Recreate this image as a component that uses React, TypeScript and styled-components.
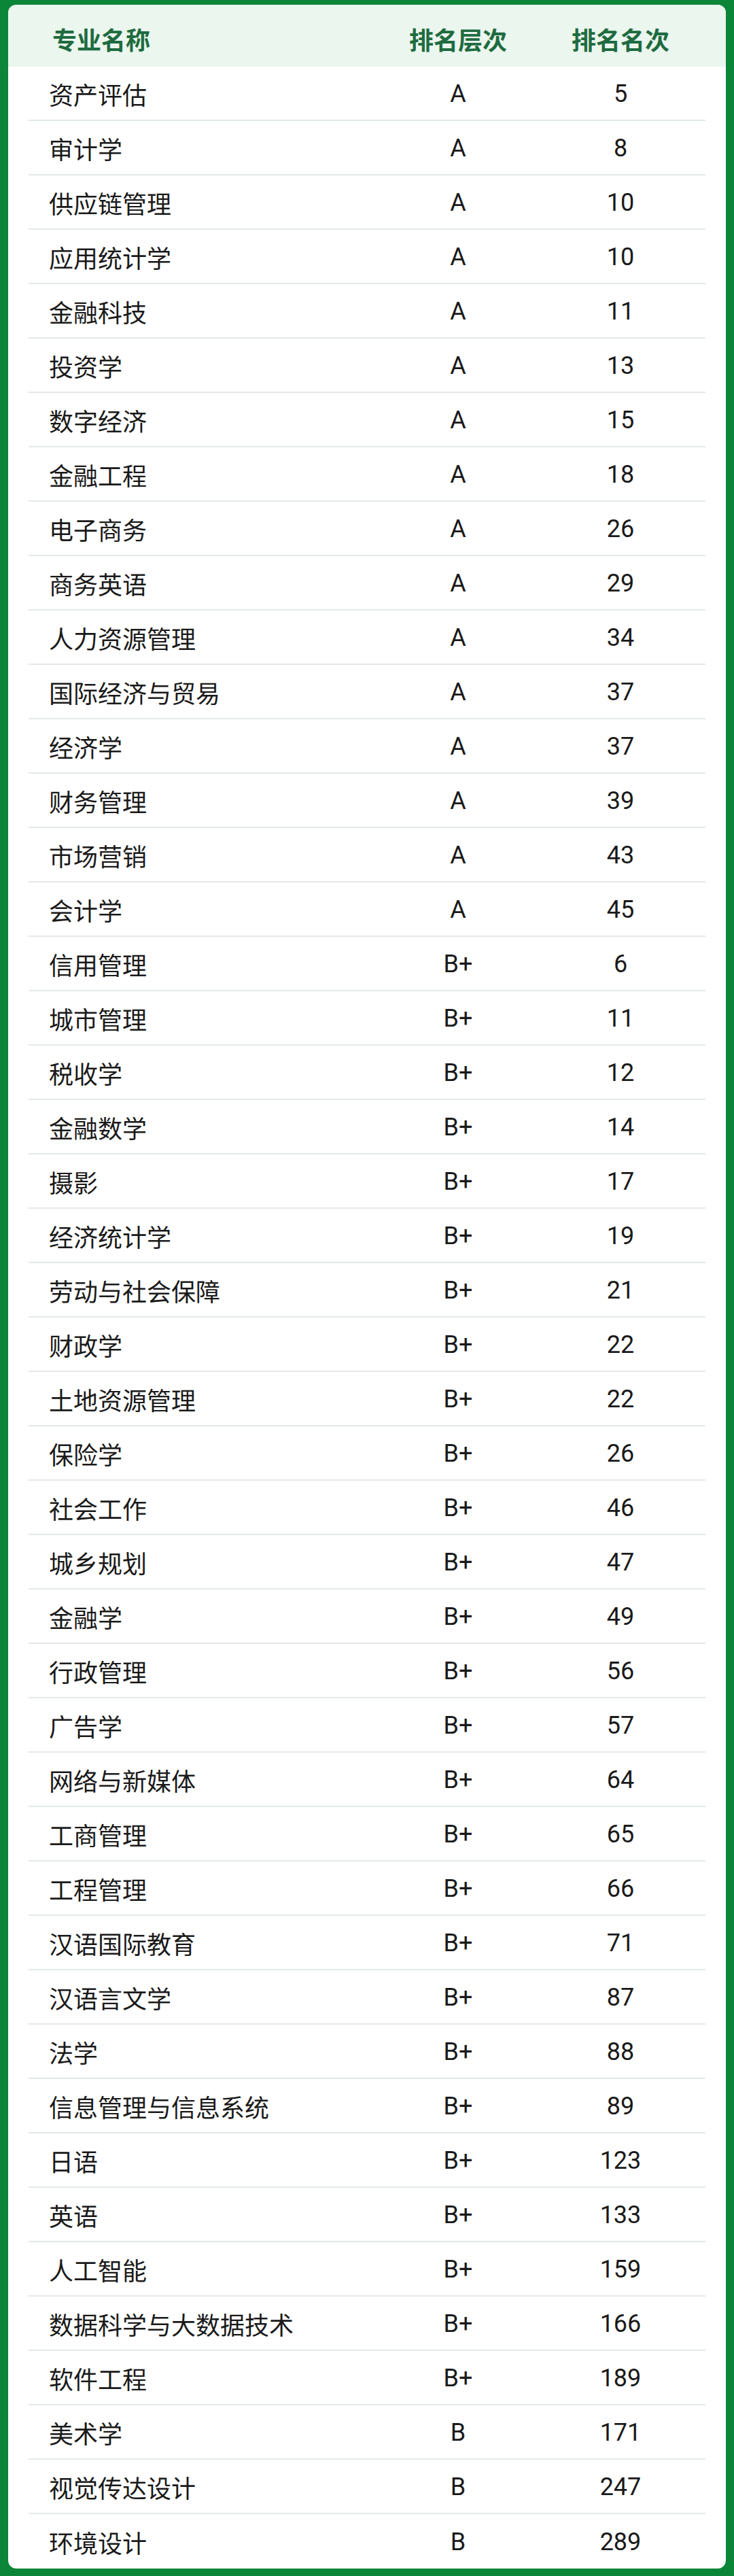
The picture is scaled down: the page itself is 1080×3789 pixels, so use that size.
import React from 'react';
import styled, { createGlobalStyle } from 'styled-components';

const rows: [string, string, number][] = [
  ['资产评估', 'A', 5],
  ['审计学', 'A', 8],
  ['供应链管理', 'A', 10],
  ['应用统计学', 'A', 10],
  ['金融科技', 'A', 11],
  ['投资学', 'A', 13],
  ['数字经济', 'A', 15],
  ['金融工程', 'A', 18],
  ['电子商务', 'A', 26],
  ['商务英语', 'A', 29],
  ['人力资源管理', 'A', 34],
  ['国际经济与贸易', 'A', 37],
  ['经济学', 'A', 37],
  ['财务管理', 'A', 39],
  ['市场营销', 'A', 43],
  ['会计学', 'A', 45],
  ['信用管理', 'B+', 6],
  ['城市管理', 'B+', 11],
  ['税收学', 'B+', 12],
  ['金融数学', 'B+', 14],
  ['摄影', 'B+', 17],
  ['经济统计学', 'B+', 19],
  ['劳动与社会保障', 'B+', 21],
  ['财政学', 'B+', 22],
  ['土地资源管理', 'B+', 22],
  ['保险学', 'B+', 26],
  ['社会工作', 'B+', 46],
  ['城乡规划', 'B+', 47],
  ['金融学', 'B+', 49],
  ['行政管理', 'B+', 56],
  ['广告学', 'B+', 57],
  ['网络与新媒体', 'B+', 64],
  ['工商管理', 'B+', 65],
  ['工程管理', 'B+', 66],
  ['汉语国际教育', 'B+', 71],
  ['汉语言文学', 'B+', 87],
  ['法学', 'B+', 88],
  ['信息管理与信息系统', 'B+', 89],
  ['日语', 'B+', 123],
  ['英语', 'B+', 133],
  ['人工智能', 'B+', 159],
  ['数据科学与大数据技术', 'B+', 166],
  ['软件工程', 'B+', 189],
  ['美术学', 'B', 171],
  ['视觉传达设计', 'B', 247],
  ['环境设计', 'B', 289],
];

const GlobalStyle = createGlobalStyle`
  html, body {
    margin: 0;
    padding: 0;
    background: #0b8639;
  }
  body {
    font-family: Roboto, "Noto Sans CJK SC", sans-serif;
  }
`;

const App = () => {
  return (
    <>
      <GlobalStyle />
      <Page>
        <Card>
          <Header>
            <HeadCell $first>专业名称</HeadCell>
            <HeadCell>排名层次</HeadCell>
            <HeadCell>排名名次</HeadCell>
          </Header>
          {rows.map(([name, level, rank], i) => (
            <Row key={name} $last={i === rows.length - 1}>
              <NameCell>{name}</NameCell>
              <Cell>{level}</Cell>
              <Cell>{rank}</Cell>
            </Row>
          ))}
        </Card>
      </Page>
    </>
  );
};

export default App;

const Page = styled.div`
  width: 1080px;
  height: 3789px;
  box-sizing: border-box;
  padding: 7px 12px 11px;
  background: #0b8639;
`;

const Card = styled.div`
  background: #ffffff;
  border-radius: 12px;
  overflow: hidden;
`;

const Header = styled.div`
  display: grid;
  grid-template-columns: 1fr 160px 160px;
  column-gap: 79px;
  align-items: center;
  height: 91px;
  padding: 8px 75px 0 30px;
  box-sizing: border-box;
  background: #eaf6ee;
`;

const HeadCell = styled.div<{ $first?: boolean }>`
  font-family: "Noto Sans CJK SC", sans-serif;
  font-size: 36px;
  font-weight: 700;
  color: #1f6b40;
  white-space: nowrap;
  text-align: ${(p) => (p.$first ? 'left' : 'center')};
  padding-left: ${(p) => (p.$first ? '35px' : '0')};
`;

const Row = styled.div<{ $last?: boolean }>`
  display: grid;
  grid-template-columns: 1fr 160px 160px;
  column-gap: 79px;
  align-items: center;
  height: 80px;
  margin: 0 30px;
  padding: 2px 45px 0 0;
  box-sizing: border-box;
  border-bottom: ${(p) => (p.$last ? 'none' : '2px solid #e3e8e8')};
  color: #1a1a1a;
  font-size: 36px;
`;

const NameCell = styled.div`
  padding-left: 30px;
  font-family: "Noto Sans CJK SC", sans-serif;
  white-space: nowrap;
`;

const Cell = styled.div`
  text-align: center;
  font-family: Roboto, "Noto Sans CJK SC", sans-serif;
`;
